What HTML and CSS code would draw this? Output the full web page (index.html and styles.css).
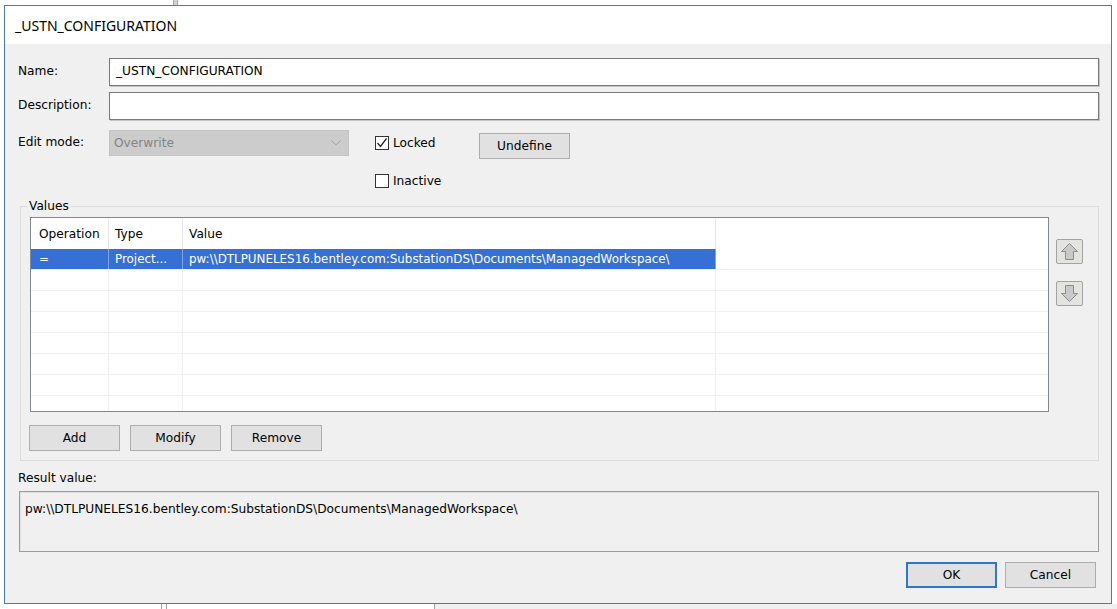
FILE: index.html
```html
<!DOCTYPE html>
<html>
<head>
    <meta charset="UTF-8">
    <link rel="stylesheet" href="styles.css">
</head>
<body>
    <div class="top-strip"><span class="edge"></span></div>

    <div class="window">
        <div class="titlebar">_USTN_CONFIGURATION</div>

        <div class="dialog">
            <div class="field-row">
                <span class="label">Name:</span>
                <div class="textbox">_USTN_CONFIGURATION</div>
            </div>
            <div class="field-row">
                <span class="label">Description:</span>
                <div class="textbox"></div>
            </div>

            <div class="mode-row">
                <span class="label mode-label">Edit mode:</span>
                <div class="combo">
                    <span>Overwrite</span>
                    <svg class="chevron" width="10" height="6" viewBox="0 0 10 6">
                        <polyline points="0.5,0.5 5,5 9.5,0.5" fill="none" stroke="#a8a8a8" stroke-width="1"/>
                    </svg>
                </div>
                <div class="checks">
                    <label class="check locked">
                        <span class="box">
                            <svg width="12" height="12" viewBox="0 0 12 12">
                                <polyline points="1.5,6 4.5,9.5 10.5,1.5" fill="none" stroke="#222" stroke-width="1.3"/>
                            </svg>
                        </span>
                        <span>Locked</span>
                    </label>
                    <label class="check inactive">
                        <span class="box"></span>
                        <span>Inactive</span>
                    </label>
                </div>
                <button class="button undefine">Undefine</button>
            </div>

            <fieldset class="values">
                <legend>Values</legend>
                <div class="values-body">
                    <div class="list">
                        <div class="list-row list-header">
                            <span class="cell">Operation</span>
                            <span class="cell">Type</span>
                            <span class="cell">Value</span>
                            <span class="cell"></span>
                        </div>
                        <div class="list-row selected">
                            <span class="cell">=</span>
                            <span class="cell">Project...</span>
                            <span class="cell">pw:\\DTLPUNELES16.bentley.com:SubstationDS\Documents\ManagedWorkspace\</span>
                            <span class="cell"></span>
                        </div>
                        <div class="list-row"><span class="cell"></span><span class="cell"></span><span class="cell"></span><span class="cell"></span></div>
                        <div class="list-row"><span class="cell"></span><span class="cell"></span><span class="cell"></span><span class="cell"></span></div>
                        <div class="list-row"><span class="cell"></span><span class="cell"></span><span class="cell"></span><span class="cell"></span></div>
                        <div class="list-row"><span class="cell"></span><span class="cell"></span><span class="cell"></span><span class="cell"></span></div>
                        <div class="list-row"><span class="cell"></span><span class="cell"></span><span class="cell"></span><span class="cell"></span></div>
                        <div class="list-row"><span class="cell"></span><span class="cell"></span><span class="cell"></span><span class="cell"></span></div>
                        <div class="list-row"><span class="cell"></span><span class="cell"></span><span class="cell"></span><span class="cell"></span></div>
                    </div>
                    <div class="arrows">
                        <button class="arrow-button">
                            <svg width="21" height="21" viewBox="0 0 21 21">
                                <polygon points="10.5,2.5 18.5,10.5 14.5,10.5 14.5,18.5 6.5,18.5 6.5,10.5 2.5,10.5" fill="#c9c9c9" stroke="#8c8c8c" stroke-width="1"/>
                            </svg>
                        </button>
                        <button class="arrow-button">
                            <svg width="21" height="21" viewBox="0 0 21 21">
                                <polygon points="10.5,18.5 18.5,10.5 14.5,10.5 14.5,2.5 6.5,2.5 6.5,10.5 2.5,10.5" fill="#c9c9c9" stroke="#8c8c8c" stroke-width="1"/>
                            </svg>
                        </button>
                    </div>
                </div>
                <div class="list-buttons">
                    <button class="button">Add</button>
                    <button class="button">Modify</button>
                    <button class="button">Remove</button>
                </div>
            </fieldset>

            <div class="result-label">Result value:</div>
            <div class="result-box">pw:\\DTLPUNELES16.bentley.com:SubstationDS\Documents\ManagedWorkspace\</div>

            <div class="dialog-buttons">
                <button class="button ok">OK</button>
                <button class="button">Cancel</button>
            </div>
        </div>
    </div>

    <div class="bottom-strip">
        <span class="line first"></span>
        <span class="line second"></span>
        <span class="shelf"></span>
    </div>
</body>
</html>
```

FILE: styles.css
```css
* {
    box-sizing: border-box;
}

body {
    margin: 0;
    width: 1117px;
    height: 609px;
    overflow: hidden;
    background-color: #ffffff;
    font-family: "DejaVu Sans", Tahoma, sans-serif;
    font-size: 12.2px;
    color: #000000;
}

/* strips of the window behind the dialog */
.top-strip {
    height: 5px;
    display: flex;
}

.top-strip .edge {
    margin-left: 173px;
    width: 5px;
    background-color: #d4d4d4;
    border-left: 1px solid #a8a8a8;
    border-right: 1px solid #a8a8a8;
}

.bottom-strip {
    height: 5px;
    display: flex;
}

.bottom-strip .line {
    width: 1px;
    background-color: #a0a0a0;
}

.bottom-strip .first {
    margin-left: 161px;
}

.bottom-strip .second {
    margin-left: 4px;
}

.bottom-strip .shelf {
    margin-left: 267px;
    flex: 1;
    background-color: #f0f0f0;
    border-left: 1px solid #a0a0a0;
}

/* dialog window */
.window {
    margin-left: 4px;
    width: 1108px;
    height: 599px;
    border: 1px solid #4677c8;
    background-color: #f0f0f0;
    display: flex;
    flex-direction: column;
}

.titlebar {
    height: 38px;
    flex-shrink: 0;
    background-color: #ffffff;
    padding-left: 10px;
    display: flex;
    align-items: center;
    font-family: "Noto Sans", "Segoe UI", sans-serif;
    font-size: 14px;
}

.dialog {
    flex: 1;
    padding: 14px 12px 0 13px;
    display: flex;
    flex-direction: column;
}

.field-row {
    display: flex;
    align-items: center;
    height: 28px;
}

.field-row + .field-row {
    margin-top: 6px;
}

.label {
    width: 91px;
    flex-shrink: 0;
    padding-bottom: 3px;
}

.textbox {
    flex: 1;
    height: 28px;
    padding: 0 6px 2px;
    display: flex;
    align-items: center;
    background-color: #ffffff;
    border: 1px solid #7a7a7a;
    box-shadow: 1px 1px 0 #c4c4c4;
}

.mode-row {
    margin-top: 10px;
    display: flex;
    align-items: flex-start;
}

.mode-label {
    line-height: 24px;
}

.combo {
    width: 240px;
    height: 26px;
    padding: 0 7px 0 4px;
    display: flex;
    align-items: center;
    justify-content: space-between;
    background-color: #cccccc;
    border: 1px solid #c4c4c4;
    color: #838383;
}

.checks {
    margin-left: 26px;
    width: 104px;
    display: flex;
    flex-direction: column;
}

.check {
    display: flex;
    align-items: center;
    gap: 4px;
    height: 14px;
    user-select: none;
}

.check.locked {
    margin-top: 6px;
}

.check.inactive {
    margin-top: 24px;
}

.box {
    width: 14px;
    height: 14px;
    flex-shrink: 0;
    background-color: #ffffff;
    border: 1px solid #333333;
    display: flex;
    align-items: center;
    justify-content: center;
}

.button {
    width: 91px;
    height: 26px;
    padding: 0;
    background-color: #e1e1e1;
    border: 1px solid #adadad;
    font-family: inherit;
    font-size: 12.2px;
    color: #000000;
}

.undefine {
    margin-top: 3px;
}

/* Values group */
.values {
    margin: 10px 0 0 2px;
    min-width: 0;
    padding: 3px 15px 9px 9px;
    border: 1px solid #dcdcdc;
}

.values legend {
    margin-left: -3px;
    padding: 0 2px;
    line-height: 16px;
}

.values-body {
    display: flex;
    gap: 7px;
}

.list {
    flex: 1;
    height: 195px;
    overflow: hidden;
    background-color: #ffffff;
    border: 1px solid #828790;
}

.list-row {
    display: grid;
    grid-template-columns: 78px 74px 533px 1fr;
    height: 21px;
    border-bottom: 1px solid #f0f0f0;
    font-size: 11.9px;
}

.list-row .cell {
    padding-left: 6px;
    display: flex;
    align-items: center;
    white-space: nowrap;
    overflow: hidden;
    border-right: 1px solid #f0f0f0;
}

.list-row .cell:first-child {
    padding-left: 8px;
}

.list-row .cell:last-child {
    border-right: none;
}

.list-header {
    height: 31px;
    border-bottom: none;
    font-size: 12.2px;
}

.list-header .cell {
    padding-top: 1px;
    border-right-color: #e8e8e8;
}

.list-row.selected .cell {
    color: #ffffff;
    background-color: #3670d5;
    border-right-color: #7fa3e6;
}

.list-row.selected .cell:last-child {
    background-color: #ffffff;
}

.arrows {
    width: 27px;
    padding-top: 22px;
    display: flex;
    flex-direction: column;
    gap: 17px;
}

.arrow-button {
    width: 27px;
    height: 25px;
    padding: 0;
    display: flex;
    align-items: center;
    justify-content: center;
    background-color: #e3e3df;
    border: 1px solid #a3a3a3;
    border-radius: 2px;
}

.list-buttons {
    margin-top: 13px;
    margin-left: -1px;
    display: flex;
    gap: 10px;
}

/* result */
.result-label {
    margin-top: 9px;
    line-height: 16px;
}

.result-box {
    margin: 5px 0 0 1px;
    height: 61px;
    padding: 9px 5px 0;
    line-height: 16px;
    background-color: #f0f0f0;
    border: 1px solid #9b9b9b;
    box-shadow: inset 1px 1px 0 #e2e2e2;
}

.dialog-buttons {
    margin-top: 10px;
    margin-right: 3px;
    display: flex;
    justify-content: flex-end;
    gap: 8px;
}

.ok {
    border-color: #2f76d2;
    box-shadow: inset 0 0 0 1px #2f76d2;
}
```
